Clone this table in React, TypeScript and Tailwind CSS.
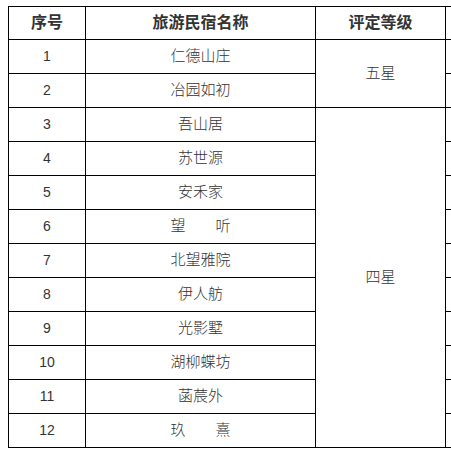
const rows: { no: number; name: string }[] = [
  { no: 1, name: '仁德山庄' },
  { no: 2, name: '冶园如初' },
  { no: 3, name: '吾山居' },
  { no: 4, name: '苏世源' },
  { no: 5, name: '安禾家' },
  { no: 6, name: '望\u3000\u3000听' },
  { no: 7, name: '北望雅院' },
  { no: 8, name: '伊人舫' },
  { no: 9, name: '光影墅' },
  { no: 10, name: '湖柳蝶坊' },
  { no: 11, name: '菡莀外' },
  { no: 12, name: '玖\u3000\u3000熹' },
]

const cell = 'border border-black text-center align-middle p-0'

export default function App() {
  return (
    <div
      className="w-[451px] h-[458px] overflow-hidden bg-white pl-[8px] pt-[6px]"
      style={{ fontFamily: '"Liberation Sans", "Noto Sans CJK SC", sans-serif' }}
    >
      <table className="border-collapse table-fixed w-[540px] text-[#333]">
        <colgroup>
          <col className="w-[77px]" />
          <col className="w-[230px]" />
          <col className="w-[130px]" />
          <col className="w-[103px]" />
        </colgroup>
        <thead>
          <tr className="h-[33px]">
            <th className={`${cell} text-[16px] font-bold`}>序号</th>
            <th className={`${cell} text-[16px] font-bold`}>旅游民宿名称</th>
            <th className={`${cell} text-[16px] font-bold`}>评定等级</th>
            <th className={cell}></th>
          </tr>
        </thead>
        <tbody className="font-light">
          {rows.map((r, i) => (
            <tr key={r.no} className="h-[34px]">
              <td className={`${cell} text-[14px]`}>{r.no}</td>
              <td className={`${cell} text-[15px]`}>{r.name}</td>
              {i === 0 && (
                <td rowSpan={2} className={`${cell} text-[15px]`}>
                  五星
                </td>
              )}
              {i === 2 && (
                <td rowSpan={10} className={`${cell} text-[15px]`}>
                  四星
                </td>
              )}
              <td className={cell}></td>
            </tr>
          ))}
        </tbody>
      </table>
    </div>
  )
}
